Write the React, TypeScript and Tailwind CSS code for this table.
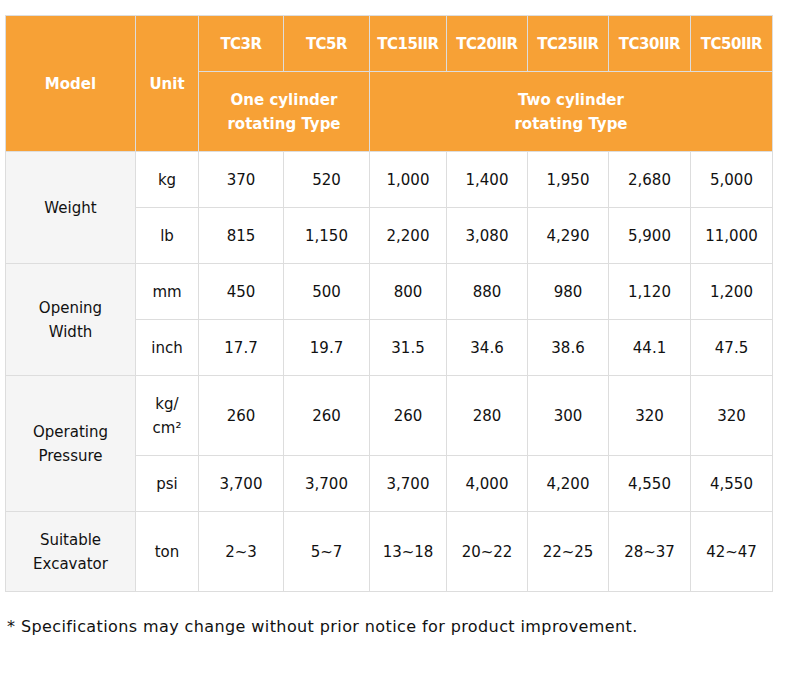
import React from "react";

const models = ["TC3R", "TC5R", "TC15IIR", "TC20IIR", "TC25IIR", "TC30IIR", "TC50IIR"];

type Group = {
  label: React.ReactNode;
  rows: { unit: React.ReactNode; values: string[]; tall?: boolean }[];
};

const groups: Group[] = [
  {
    label: "Weight",
    rows: [
      { unit: "kg", values: ["370", "520", "1,000", "1,400", "1,950", "2,680", "5,000"] },
      { unit: "lb", values: ["815", "1,150", "2,200", "3,080", "4,290", "5,900", "11,000"] },
    ],
  },
  {
    label: (
      <>
        Opening
        <br />
        Width
      </>
    ),
    rows: [
      { unit: "mm", values: ["450", "500", "800", "880", "980", "1,120", "1,200"] },
      { unit: "inch", values: ["17.7", "19.7", "31.5", "34.6", "38.6", "44.1", "47.5"] },
    ],
  },
  {
    label: (
      <>
        Operating
        <br />
        Pressure
      </>
    ),
    rows: [
      {
        unit: (
          <>
            kg/
            <br />
            <span className="text-[15px]">cm²</span>
          </>
        ),
        values: ["260", "260", "260", "280", "300", "320", "320"],
        tall: true,
      },
      { unit: "psi", values: ["3,700", "3,700", "3,700", "4,000", "4,200", "4,550", "4,550"] },
    ],
  },
  {
    label: (
      <>
        Suitable
        <br />
        Excavator
      </>
    ),
    rows: [
      { unit: "ton", values: ["2~3", "5~7", "13~18", "20~22", "22~25", "28~37", "42~47"], tall: true },
    ],
  },
];

const colWidths = [130, 63, 85, 86, 77, 81, 81, 82, 82];

export default function App() {
  return (
    <div className="min-h-screen bg-white pl-[5px] pt-[15px] font-['DejaVu_Sans',sans-serif] text-[#111]">
      <table className="w-[768px] table-fixed border-collapse border border-[#dddddd] text-center text-[15px] leading-6">
        <colgroup>
          {colWidths.map((w, i) => (
            <col key={i} style={{ width: w }} />
          ))}
        </colgroup>
        <thead className="bg-[#f7a136] text-[15px] font-bold text-white">
          <tr className="h-[56px]">
            <th rowSpan={2} className="border border-[#dddddd]">
              Model
            </th>
            <th rowSpan={2} className="border border-[#dddddd]">
              Unit
            </th>
            {models.map((m) => (
              <th key={m} className="border border-[#dddddd] text-[15px] tracking-[-0.5px]">
                {m}
              </th>
            ))}
          </tr>
          <tr className="h-[80px]">
            <th colSpan={2} className="border border-[#dddddd]">
              One cylinder
              <br />
              rotating Type
            </th>
            <th colSpan={5} className="border border-[#dddddd]">
              Two cylinder
              <br />
              rotating Type
            </th>
          </tr>
        </thead>
        <tbody>
          {groups.map((g, gi) =>
            g.rows.map((r, ri) => (
              <tr key={`${gi}-${ri}`} className={r.tall ? "h-[80px]" : "h-[56px]"}>
                {ri === 0 && (
                  <td rowSpan={g.rows.length} className="border border-[#dddddd] bg-[#f5f5f5]">
                    {g.label}
                  </td>
                )}
                <td className="border border-[#dddddd]">{r.unit}</td>
                {r.values.map((v, vi) => (
                  <td key={vi} className="border border-[#dddddd]">
                    {v}
                  </td>
                ))}
              </tr>
            ))
          )}
        </tbody>
      </table>
      <p className="mt-[23px] pl-[2px] text-[16px] leading-6 tracking-[0.4px]">
        * Specifications may change without prior notice for product improvement.
      </p>
    </div>
  );
}
